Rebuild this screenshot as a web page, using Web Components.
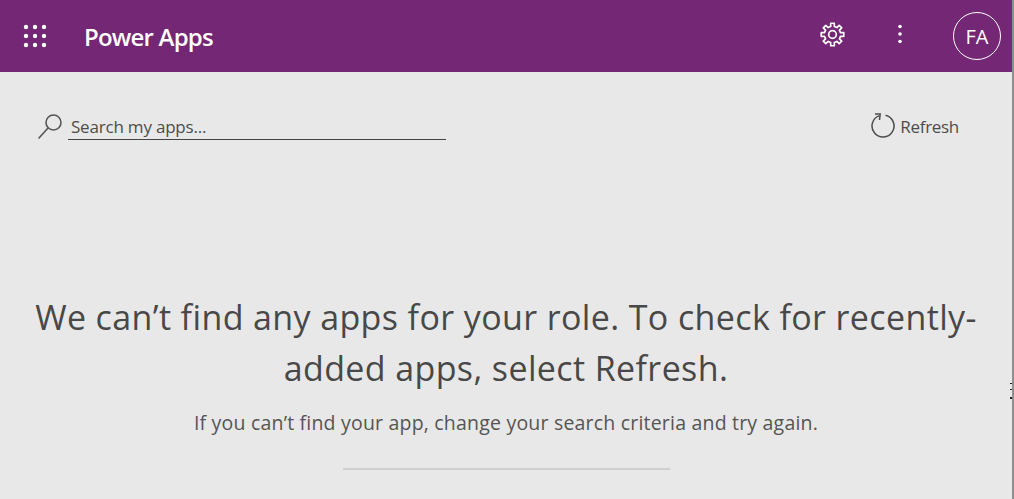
<!DOCTYPE html>
<html lang="en">
<head>
<meta charset="UTF-8" />
<title>Power Apps</title>
<style>
    html, body { margin: 0; height: 100%; overflow: hidden; }
    body { background: #e8e8e8; font-family: "Open Sans", "Noto Sans", sans-serif; }
    apps-page { height: 499px; }
</style>
</head>
<body>
<apps-page>
    <app-header slot="header" title-text="Power Apps" initials="FA"></app-header>
    <search-bar slot="tools"></search-bar>
    <empty-state slot="main">
        <span slot="title">We can’t find any apps for your role. To check for recently-added apps, select Refresh.</span>
        If you can’t find your app, change your search criteria and try again.
    </empty-state>
</apps-page>

<template id="page-tpl">
    <style>
        :host { display: flex; flex-direction: column; box-sizing: border-box; border-right: 2px solid #8f8f8f; overflow: hidden; position: relative; }
        .main { flex: 1; display: flex; flex-direction: column; }
        /* resize grip ticks over the window edge */
        .grip { position: absolute; right: 0; top: 383px; width: 2px; height: 16px; background: linear-gradient(#222 0 1px, transparent 1px 6px, #222 6px 7px, transparent 7px 14px, #222 14px 16px); }
    </style>
    <slot name="header"></slot>
    <slot name="tools"></slot>
    <div class="main"><slot name="main"></slot></div>
    <div class="grip"></div>
</template>

<template id="header-tpl">
    <style>
        :host { display: flex; align-items: center; height: 72px; flex: none; background: #742774; color: #fff; }
        button { all: unset; display: flex; align-items: center; justify-content: center; }
        .waffle { margin: -1px 0 0 23px; width: 24px; height: 24px; }
        .name { margin-left: 37px; margin-top: 1px; font-size: 24px; font-weight: 600; letter-spacing: -0.8px; white-space: nowrap; }
        .gear { margin: -4px 0 0 auto; width: 25px; height: 25px; }
        .more { margin: -4px 0 0 52px; width: 6px; height: 20px; }
        .avatar { margin: 0 11px 0 50px; width: 46px; height: 46px; border: 1px solid #fff; border-radius: 50%; font-size: 20px; }
    </style>
    <button class="waffle" aria-label="App launcher">
        <svg width="24" height="24" viewBox="0 0 24 24" fill="#fff">
            <circle cx="3" cy="3" r="2.2"/><circle cx="12" cy="3" r="2.2"/><circle cx="21" cy="3" r="2.2"/>
            <circle cx="3" cy="12" r="2.2"/><circle cx="12" cy="12" r="2.2"/><circle cx="21" cy="12" r="2.2"/>
            <circle cx="3" cy="21" r="2.2"/><circle cx="12" cy="21" r="2.2"/><circle cx="21" cy="21" r="2.2"/>
        </svg>
    </button>
    <div class="name"></div>
    <button class="gear" aria-label="Settings">
        <svg width="25" height="25" viewBox="0 0 25 25" fill="none" stroke="#fff" stroke-width="1.7" stroke-linejoin="round">
            <path class="teeth"/>
            <circle cx="12.5" cy="12.5" r="3.8"/>
        </svg>
    </button>
    <button class="more" aria-label="More">
        <svg width="6" height="20" viewBox="0 0 6 20" fill="#fff"><circle cx="3" cy="2.5" r="1.8"/><circle cx="3" cy="10" r="1.8"/><circle cx="3" cy="17.5" r="1.8"/></svg>
    </button>
    <button class="avatar"></button>
</template>

<template id="search-tpl">
    <style>
        :host { display: flex; align-items: flex-start; height: 68px; flex: none; color: #4d4d4d; font-size: 17px; }
        .search { margin: 39px 0 0 37px; display: flex; align-items: flex-start; }
        .field { margin-left: 4px; width: 378px; height: 29px; box-sizing: border-box; border-bottom: 1px solid #444; padding: 3px 0 0 3px; line-height: 26px; letter-spacing: -0.2px; white-space: nowrap; }
        svg { flex: none; }
        .search svg { margin-top: 2px; }
        .refresh { all: unset; margin: 41px 53px 0 auto; display: flex; align-items: center; gap: 5px; letter-spacing: -0.3px; line-height: 26px; }
    </style>
    <div class="search">
        <svg width="27" height="27" viewBox="0 0 27 27" fill="none" stroke="#555" stroke-width="1.6">
            <circle cx="16.5" cy="9.5" r="7.5"/><path d="M11 15 2 25" stroke-linecap="round"/>
        </svg>
        <div class="field">Search my apps...</div>
    </div>
    <button class="refresh">
        <svg width="25" height="27" viewBox="0 0 25 27" fill="none" stroke="#4d4d4d" stroke-width="1.5">
            <path d="M15.5 2.3A11 11 0 1 1 9.5 2.6"/><path d="M5 1H10.2L9.5 7"/>
        </svg>
        <span>Refresh</span>
    </button>
</template>

<template id="empty-tpl">
    <style>
        :host { display: flex; flex-direction: column; align-items: center; color: #4a4a4a; text-align: center; padding: 0 30px; margin-top: 152px; }
        h1 { margin: 0; font-size: 34px; font-weight: 400; line-height: 51px; letter-spacing: 0.38px; width: 100%; color: #484848; }
        p { margin: 15px 0 0; font-size: 19.5px; line-height: 28px; letter-spacing: 0.2px; color: #555; white-space: nowrap; }
        hr { margin: 31px 0 0; width: 327px; height: 2px; background: #cfcfcf; border: 0; }
    </style>
    <h1><slot name="title"></slot></h1>
    <p><slot></slot></p>
    <hr />
</template>

<script type="module">
    class Base extends HTMLElement {
        constructor(tpl) {
            super();
            this.attachShadow({ mode: 'open' });
            this.shadowRoot.appendChild(document.getElementById(tpl).content.cloneNode(true));
        }
    }

    // eight square teeth, one pointing straight up
    function gearPath(cx, cy, outer, inner) {
        const pt = (r, deg) => {
            const a = (deg - 90) * Math.PI / 180;
            return (cx + r * Math.cos(a)).toFixed(2) + ' ' + (cy + r * Math.sin(a)).toFixed(2);
        };
        let d = '';
        for (let k = 0; k < 8; k++) {
            const t = k * 45;
            d += (k ? 'L' : 'M') + pt(inner, t - 13) + 'L' + pt(outer, t - 9) + 'L' + pt(outer, t + 9) + 'L' + pt(inner, t + 13);
        }
        return d + 'Z';
    }

    class AppsPage extends Base { constructor() { super('page-tpl'); } }
    class AppHeader extends Base {
        constructor() { super('header-tpl'); }
        connectedCallback() {
            this.shadowRoot.querySelector('.name').textContent = this.getAttribute('title-text');
            this.shadowRoot.querySelector('.avatar').textContent = this.getAttribute('initials');
            this.shadowRoot.querySelector('.teeth').setAttribute('d', gearPath(12.5, 12.5, 11.4, 8.2));
        }
    }
    class SearchBar extends Base { constructor() { super('search-tpl'); } }
    class EmptyState extends Base { constructor() { super('empty-tpl'); } }

    customElements.define('apps-page', AppsPage);
    customElements.define('app-header', AppHeader);
    customElements.define('search-bar', SearchBar);
    customElements.define('empty-state', EmptyState);
</script>
</body>
</html>
